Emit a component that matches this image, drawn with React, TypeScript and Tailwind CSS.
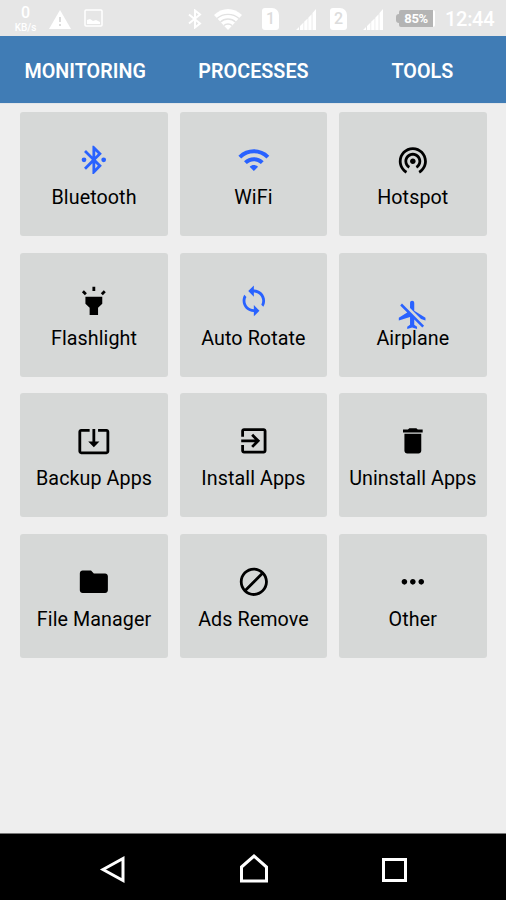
import React from "react";

type Tile = { label: string; path: string; blue?: boolean; iconClass?: string };

const tiles: Tile[] = [
  {
    label: "Bluetooth",
    blue: true,
    path: "M5 10.300a1.700 1.700 0 1 0 0 3.400a1.700 1.700 0 1 0 0-3.400zm12.710-2.590L12 2h-1v7.59L6.41 5 5 6.41 10.59 12 5 17.59 6.41 19 11 14.41V22h1l5.71-5.71-4.3-4.29 4.3-4.29zM13 5.83l1.88 1.88L13 9.59V5.83zm1.88 10.46L13 18.17v-3.76l1.88 1.88zM19 10.300a1.700 1.700 0 1 0 0 3.400a1.700 1.700 0 1 0 0-3.400z",
  },
  {
    label: "WiFi",
    blue: true,
    path: "M1 9l2 2c4.97-4.97 13.03-4.97 18 0l2-2C16.93 2.93 7.08 2.93 1 9zm8 8l3 3 3-3c-1.65-1.66-4.34-1.66-6 0zm-4-4l2 2c2.76-2.76 7.24-2.76 10 0l2-2C15.14 9.14 8.87 9.14 5 13z",
  },
  {
    label: "Hotspot",
    path: "M12 11c-1.1 0-2 .9-2 2s.9 2 2 2 2-.9 2-2-.9-2-2-2zm6 2c0-3.31-2.69-6-6-6s-6 2.69-6 6c0 2.22 1.21 4.15 3 5.19l1-1.74c-1.19-.7-2-1.97-2-3.45 0-2.21 1.79-4 4-4s4 1.79 4 4c0 1.48-.81 2.75-2 3.45l1 1.74c1.79-1.04 3-2.97 3-5.19zM12 3C6.48 3 2 7.48 2 13c0 3.7 2.01 6.92 4.99 8.65l1-1.73C5.61 18.53 4 15.96 4 13c0-4.42 3.58-8 8-8s8 3.58 8 8c0 2.96-1.61 5.53-4 6.92l1 1.73c2.99-1.73 5-4.95 5-8.65 0-5.52-4.48-10-10-10z",
  },
  {
    label: "Flashlight",
    path: "M6 14l3 3v5h6v-5l3-3V9H6zm5-12h2v3h-2zM3.5 5.875L4.914 4.46l2.12 2.122L5.62 7.997zm13.46.71l2.123-2.12 1.414 1.414L18.375 8z",
  },
  {
    label: "Auto Rotate",
    blue: true,
    path: "M12 4V1L8 5l4 4V6c3.31 0 6 2.69 6 6 0 1.01-.25 1.97-.7 2.8l1.46 1.46C19.54 15.03 20 13.57 20 12c0-4.42-3.58-8-8-8zm0 14c-3.31 0-6-2.69-6-6 0-1.01.25-1.97.7-2.8L5.24 7.74C4.46 8.97 4 10.43 4 12c0 4.42 3.58 8 8 8v3l4-4-4-4v3z",
  },
  {
    label: "Airplane",
    blue: true,
    iconClass: "mt-[14px] -mb-[14px]",
    path: "M13 9V3.5c0-.83-.67-1.5-1.5-1.5S10 2.67 10 3.5v3.68l7.83 7.83L21 16v-2l-8-5zM3 5.27l4.99 4.99L2 14v2l8-2.5V19l-2 1.5V22l3.5-1 3.5 1v-1.5L13 19v-3.73L18.73 21 20 19.73 4.27 4 3 5.27z",
  },
  {
    label: "Backup Apps",
    path: "M12 16.5l4-4h-3v-9h-2v9H8l4 4zm9-13h-6v1.99h6v14.03H3V5.49h6V3.5H3c-1.1 0-2 .9-2 2v14c0 1.1.9 2 2 2h18c1.1 0 2-.9 2-2v-14c0-1.1-.9-2-2-2z",
  },
  {
    label: "Install Apps",
    path: "M10.09 15.59L11.5 17l5-5-5-5-1.41 1.41L12.67 11H3v2h9.67l-2.58 2.59zM19 3H5c-1.11 0-2 .9-2 2v4h2V5h14v14H5v-4H3v4c0 1.1.89 2 2 2h14c1.1 0 2-.9 2-2V5c0-1.1-.9-2-2-2z",
  },
  {
    label: "Uninstall Apps",
    path: "M6 19c0 1.1.9 2 2 2h8c1.1 0 2-.9 2-2V7H6v12zM19 4h-3.5l-1-1h-5l-1 1H5v2h14V4z",
  },
  {
    label: "File Manager",
    path: "M10 4H4c-1.1 0-1.99.9-1.99 2L2 18c0 1.1.9 2 2 2h16c1.1 0 2-.9 2-2V8c0-1.1-.9-2-2-2h-8l-2-2z",
  },
  {
    label: "Ads Remove",
    iconClass: "-scale-x-100",
    path: "M12 2C6.48 2 2 6.48 2 12s4.48 10 10 10 10-4.48 10-10S17.52 2 12 2zm0 18c-4.42 0-8-3.58-8-8 0-1.85.63-3.55 1.69-4.9L16.9 18.31C15.55 19.37 13.85 20 12 20zm6.31-3.1L7.1 5.69C8.45 4.63 10.15 4 12 4c4.42 0 8 3.58 8 8 0 1.85-.63 3.55-1.69 4.9z",
  },
  {
    label: "Other",
    path: "M6 10c-1.1 0-2 .9-2 2s.9 2 2 2 2-.9 2-2-.9-2-2-2zm12 0c-1.1 0-2 .9-2 2s.9 2 2 2 2-.9 2-2-.9-2-2-2zm-6 0c-1.1 0-2 .9-2 2s.9 2 2 2 2-.9 2-2-.9-2-2-2z",
  },
];

function Signal({ className }: { className: string }) {
  return (
    <svg className={className} width="20" height="21" viewBox="0 0 20 21" fill="#fff">
      <path d="M0 21l3-3v3zM4 17l3.500-3.500V21H4zM8.200 12.800L11.600 9.400V21H8.200zM12.300 8.700l3.300-3.500V21h-3.300zM16.500 4L20 0v21h-3.500z" />
    </svg>
  );
}

function Sim({ n, className }: { n: string; className: string }) {
  return (
    <div
      className={`flex h-[22px] w-[17px] items-center justify-center rounded-[3px] rounded-tr-[7px] bg-white text-[16px] font-medium leading-none text-[#dcdcdc] ${className}`}
    >
      {n}
    </div>
  );
}

function StatusBar() {
  return (
    <div className="flex h-9 items-start bg-[#e6e6e6] text-white">
      <div className="ml-[12px] mt-[4px] flex w-[27px] flex-col items-center">
        <span className="text-[16px] font-medium leading-[18px]">0</span>
        <span className="text-[10px] font-medium leading-[12px]">KB/s</span>
      </div>
      <svg className="ml-[10px] mt-[10px]" width="22" height="19" viewBox="0 0 22 19">
        <path d="M11 0l11 19H0z" fill="#fff" />
        <path d="M10 7h2v5h-2zM10 14h2v2h-2z" fill="#dcdcdc" />
      </svg>
      <svg className="ml-[13px] mt-[9px]" width="19" height="18" viewBox="0 0 19 18">
        <rect x="1" y="1" width="17" height="16" rx="1" fill="none" stroke="#fff" strokeWidth="1.5" />
        <path d="M3 15v-4l3-1 3 2 3-1 4 2v2z" fill="#fff" />
      </svg>
      <svg className="ml-[85px] mt-[9px]" width="14" height="20" viewBox="0 0 14 20" fill="none" stroke="#fff" strokeWidth="2">
        <path d="M1 5.5l11 9L7 18.5v-17l5 4-11 9" />
      </svg>
      <svg className="ml-[12px] mt-[9px]" width="28" height="21" viewBox="0 0 28 21">
        <path d="M0 6C8-2 20-2 28 6L14 21z" fill="#fff" />
        <path d="M3 9.5c6-5.5 16-5.5 22 0M6.5 13c4-4 11-4 15 0M10 16.5c2-2 6-2 8 0" fill="none" stroke="#e2e2e2" strokeWidth="1.4" />
      </svg>
      <Sim n="1" className="ml-[20px] mt-[8px]" />
      <Signal className="ml-[17px] mt-[9px]" />
      <Sim n="2" className="ml-[14px] mt-[8px]" />
      <Signal className="ml-[16px] mt-[9px]" />
      <div className="ml-[13px] mt-[10px] flex items-center">
        <div className="h-[9px] w-[3px] rounded-l-sm bg-[#b4b4b4]" />
        <div className="flex h-[17px] w-[36px] items-center justify-center rounded-[2px] border-r-2 border-white bg-[#b4b4b4] text-[13px] font-bold leading-none tracking-[-0.4px]">
          85%
        </div>
      </div>
      <span className="ml-[10px] mt-[8px] whitespace-nowrap text-[20px] font-medium leading-[23px] tracking-[-0.3px]">
        12:44
      </span>
    </div>
  );
}

export default function App() {
  return (
    <div className="flex h-[900px] w-[506px] flex-col overflow-hidden bg-[#eeeeee] font-['Roboto',sans-serif]">
      <StatusBar />
      <nav className="grid h-[67px] grid-cols-3 items-center bg-[#407cb5] pl-[1px] pt-[4px] text-center text-[19.7px] font-semibold tracking-[0.05px] text-white">
        <span>MONITORING</span>
        <span>PROCESSES</span>
        <span className="pl-[1px]">TOOLS</span>
      </nav>
      <div className="h-px bg-[#e2e5e8]" />
      <main className="flex-1 pl-[20.2px] pt-[8px]">
        <div className="grid grid-cols-[repeat(3,147.7px)] gap-x-[11.7px] gap-y-[16.7px]">
          {tiles.map((t) => (
            <button
              key={t.label}
              className="flex h-[124px] flex-col items-center rounded-[3px] bg-[#d6d8d7] pt-[31px] text-black"
            >
              <svg
                viewBox="0 0 24 24"
                className={`h-[33.7px] w-[33.7px] shrink-0 ${t.blue ? "fill-[#2962ff]" : "fill-black"} ${t.iconClass ?? ""}`}
              >
                <path d={t.path} />
              </svg>
              <span className="mt-[9.4px] whitespace-nowrap text-[19.7px] leading-[23px] tracking-[0.08px]">
                {t.label}
              </span>
            </button>
          ))}
        </div>
      </main>
      <footer className="flex h-[67px] items-start border-t border-[#777] bg-black">
        <svg className="ml-[99px] mt-[20px]" width="27" height="30" viewBox="0 0 27 30" fill="none" stroke="#fff" strokeWidth="3">
          <path d="M4 15.500l20-11v22z" />
        </svg>
        <svg className="ml-[114px] mt-[19px]" width="28" height="31" viewBox="0 0 28 31" fill="none" stroke="#fff" strokeWidth="3">
          <path d="M1.500 14L14 3l12.500 11v14h-25z" />
        </svg>
        <div className="ml-[114px] mt-[24px] h-[24px] w-[25px] border-[3px] border-white" />
      </footer>
    </div>
  );
}
